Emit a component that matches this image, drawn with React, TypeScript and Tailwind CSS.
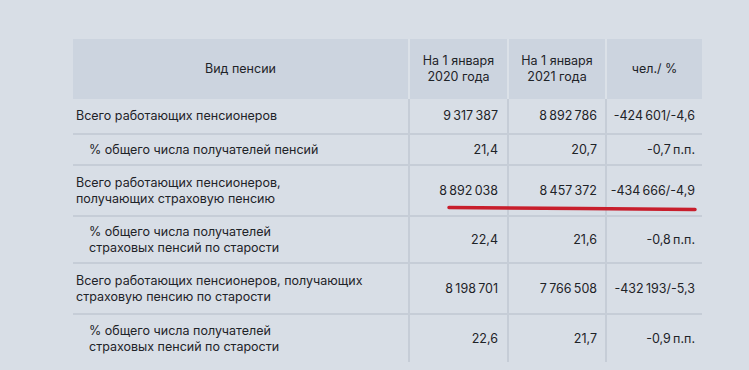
import React from 'react';

type Row = {
  label: string[];
  indent?: boolean;
  y2020: string;
  y2021: string;
  diff: string;
  h: string;
};

// thin spaces between digit groups, as in the source table
const n = (s: string) => s.replace(/ /g, '\u2009');

const rows: Row[] = [
  { label: ['Всего работающих пенсионеров'], y2020: '9 317 387', y2021: '8 892 786', diff: '-424 601/-4,6', h: 'h-[36px]' },
  { label: ['% общего числа получателей пенсий'], indent: true, y2020: '21,4', y2021: '20,7', diff: '-0,7 п.п.', h: 'h-[31px]' },
  {
    label: ['Всего работающих пенсионеров,', 'получающих страховую пенсию'],
    y2020: '8 892 038',
    y2021: '8 457 372',
    diff: '-434 666/-4,9',
    h: 'h-[51px]',
  },
  {
    label: ['% общего числа получателей', 'страховых пенсий по старости'],
    indent: true,
    y2020: '22,4',
    y2021: '21,6',
    diff: '-0,8 п.п.',
    h: 'h-[47px]',
  },
  {
    label: ['Всего работающих пенсионеров, получающих', 'страховую пенсию по старости'],
    y2020: '8 198 701',
    y2021: '7 766 508',
    diff: '-432 193/-5,3',
    h: 'h-[51px]',
  },
  {
    label: ['% общего числа получателей', 'страховых пенсий по старости'],
    indent: true,
    y2020: '22,6',
    y2021: '21,7',
    diff: '-0,9 п.п.',
    h: 'h-[47px]',
  },
];

export default function App() {
  return (
    <div
      className="relative w-[749px] h-[370px] overflow-hidden bg-[#d8dee6] text-[#1e2328] text-[12.5px] leading-[16px]"
      style={{ fontFamily: 'Inter, "Noto Sans", sans-serif' }}
    >
      <div className="ml-[73px] pt-[39px] w-[629px]">
        {/* header */}
        <div className="flex h-[60px] bg-[#ccd4df]">
          <div className="w-[335px] flex items-center justify-center">Вид пенсии</div>
          <div className="w-[99px] flex items-center justify-center text-center border-l-2 border-[#dbe1e8]">
            На 1 января
            <br />
            2020 года
          </div>
          <div className="w-[98px] flex items-center justify-center text-center border-l-2 border-[#dbe1e8]">
            На 1 января
            <br />
            2021 года
          </div>
          <div className="w-[97px] flex items-center justify-center border-l-2 border-[#dbe1e8]">чел./ %</div>
        </div>

        {rows.map((r, i) => (
          <div
            key={i}
            className={`flex ${r.h} ${i < rows.length - 1 ? 'border-b-2 border-[#c6cdd7]' : ''}`}
          >
            <div className={`w-[335px] flex flex-col justify-center ${r.indent ? 'pl-[16px]' : 'pl-[3px]'}`}>
              {r.label.map((l) => (
                <span key={l}>{l}</span>
              ))}
            </div>
            <div className="w-[99px] flex items-center justify-end whitespace-nowrap pr-[9px] border-l-2 border-[#c6cdd7]">{n(r.y2020)}</div>
            <div className="w-[98px] flex items-center justify-end whitespace-nowrap pr-[8px] border-l-2 border-[#c6cdd7]">{n(r.y2021)}</div>
            <div className="w-[97px] flex items-center justify-end whitespace-nowrap pr-[7px] border-l-2 border-[#c6cdd7]">{n(r.diff)}</div>
          </div>
        ))}
      </div>

      {/* red marker underline */}
      <svg className="absolute left-0 top-0 pointer-events-none" width="749" height="370">
        <path
          d="M449 207.5 C 520 208.5, 620 208.5, 695 209.5"
          stroke="#c81e2c"
          strokeWidth="3.5"
          strokeLinecap="round"
          fill="none"
        />
      </svg>
    </div>
  );
}
